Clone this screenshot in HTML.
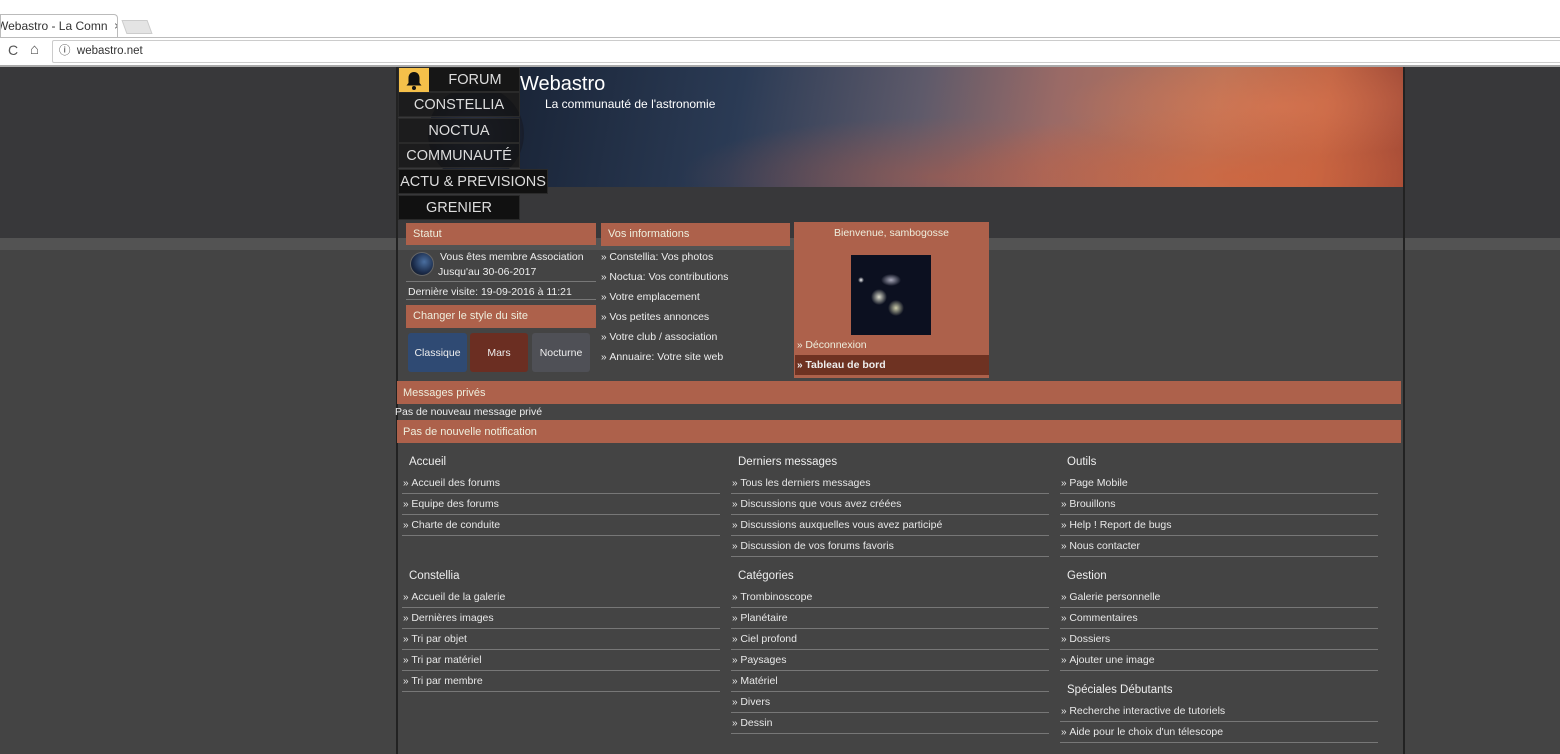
<!DOCTYPE html>
<html><head><meta charset="utf-8"><style>
*{margin:0;padding:0;box-sizing:border-box}
body{width:1560px;height:754px;overflow:hidden;background:#444;font-family:"Liberation Sans","DejaVu Sans",sans-serif;position:relative;color:#e8e8e8}
.a{position:absolute}
.top{left:0;top:0;width:1560px;height:67px;background:#fff}
.band1{left:0;top:67px;width:1560px;height:171px;background:#38383a}
.band2{left:0;top:238px;width:1560px;height:12px;background:#535353}
.vl{top:67px;width:2px;height:687px;background:#222}
.banner{left:520px;top:67px;width:883px;height:120px;background:
radial-gradient(ellipse 220px 50px at 760px 40px,rgba(225,120,80,.55),transparent),
radial-gradient(ellipse 300px 70px at 720px 110px,rgba(210,100,60,.7),transparent),
radial-gradient(ellipse 260px 60px at 420px 110px,rgba(180,90,70,.5),transparent),
linear-gradient(100deg,#1a2538 0%,#2b3b55 25%,#5e5a6a 45%,#9a6a66 60%,#bb7458 78%,#c06545 90%,#9a4535 100%)}
.nav{left:398px;width:122px;height:25px;background:#111;border:1px solid #2a2a2a;color:#ddd;font-size:14.5px;text-align:center;line-height:24px;font-family:"Liberation Sans",sans-serif}
.hd{background:#ad614b;color:#eed;font-size:11px;line-height:22px;padding-left:7px}
.t{font-size:10.5px;color:#eee;white-space:nowrap}
.li{font-size:10.5px;color:#eee;height:20px;line-height:20px}
.col{position:absolute;width:318px}
.col h4{font-weight:normal;font-size:11.5px;color:#eee;height:19px;line-height:19px;padding-left:7px;margin-bottom:1px}
.col .r{height:21px;line-height:20px;border-bottom:1px solid #777;font-size:10.5px;padding-left:1px}
.col .r:before,.li:before{content:"» ";font-size:10px}
</style></head><body>
<div class="a top">
 <div class="a" style="left:0;top:14px;width:118px;height:24px;background:#fff;border:1px solid #bbb;border-bottom:none;border-radius:0 4px 0 0;font-size:12px;color:#333;line-height:22px;white-space:nowrap;overflow:hidden"><span style="margin-left:-4px">Webastro - La Comn</span>&nbsp;&nbsp;<span style="color:#555">×</span></div>
 <div class="a" style="left:124px;top:20px;width:26px;height:14px;background:#e4e4e4;border:1px solid #ccc;transform:skewX(20deg)"></div>
 <div class="a" style="left:0;top:37px;width:1560px;height:1px;background:#bbb"></div>
 <div class="a" style="left:8px;top:42px;font-size:14px;color:#555">C</div>
 <div class="a" style="left:30px;top:41px;font-size:15px;color:#555">⌂</div>
 <div class="a" style="left:52px;top:40px;width:1510px;height:23px;border:1px solid #ccc;border-radius:2px;font-size:11.5px;color:#333;line-height:21px;padding-left:6px">ⓘ&nbsp; webastro.net</div>
 <div class="a" style="left:0;top:65px;width:1560px;height:2px;background:#aaa"></div>
</div>
<div class="a band1"></div><div class="a band2"></div>
<div class="a vl" style="left:396px"></div><div class="a vl" style="left:1403px"></div>
<div class="a banner"></div>
<div class="a" style="left:520px;top:73px;font-size:20px;color:#fff;font-family:'Liberation Sans',sans-serif">Webastro</div>
<div class="a" style="left:545px;top:97px;font-size:12px;color:#fff;font-family:'Liberation Sans',sans-serif">La communauté de l'astronomie</div>
<div class="a" style="left:428px;top:86px;width:96px;height:96px;border-radius:50%;background:radial-gradient(circle,#2a3550 0%,#1a2030 60%,#111 100%);opacity:.8"></div>
<div class="a nav" style="top:67px;background:rgba(17,17,17,.85)"><span style="position:absolute;left:0;top:0;width:30px;height:24px;background:#f5c04a"><svg width="30" height="24" viewBox="0 0 30 24"><path d="M15 4c-3.5 0-5.5 2.5-5.5 6v5l-2 2.5h15l-2-2.5v-5c0-3.5-2-6-5.5-6z" fill="#111"/><circle cx="15" cy="20" r="2" fill="#111"/></svg></span><span style="margin-left:32px">FORUM</span></div>
<div class="a nav" style="top:92px;background:rgba(17,17,17,.7)">CONSTELLIA</div>
<div class="a nav" style="top:118px;background:rgba(17,17,17,.7)">NOCTUA</div>
<div class="a nav" style="top:143px;background:rgba(17,17,17,.7)">COMMUNAUTÉ</div>
<div class="a nav" style="top:169px;width:150px">ACTU &amp; PREVISIONS</div>
<div class="a nav" style="top:195px">GRENIER</div>

<div class="a hd" style="left:406px;top:223px;width:190px">Statut</div>
<div class="a" style="left:410px;top:252px;width:24px;height:24px;border-radius:50%;background:radial-gradient(circle at 60% 40%,#4a6fa0,#1a2a48 60%,#111);border:1px solid #666"></div>
<div class="a t" style="left:440px;top:251px">Vous êtes membre Association</div>
<div class="a t" style="left:438px;top:266px">Jusqu'au 30-06-2017</div>
<div class="a" style="left:406px;top:281px;width:190px;height:1px;background:#777"></div>
<div class="a t" style="left:408px;top:286px">Dernière visite: 19-09-2016 à 11:21</div>
<div class="a" style="left:406px;top:299px;width:190px;height:1px;background:#777"></div>
<div class="a hd" style="left:406px;top:305px;width:190px;height:23px;line-height:23px">Changer le style du site</div>
<div class="a t" style="left:408px;top:333px;width:59px;height:39px;background:#2f4a73;border-radius:3px;text-align:center;line-height:40px">Classique</div>
<div class="a t" style="left:470px;top:333px;width:58px;height:39px;background:#6b2e22;border-radius:3px;text-align:center;line-height:40px">Mars</div>
<div class="a t" style="left:532px;top:333px;width:58px;height:39px;background:#4f5056;border-radius:3px;text-align:center;line-height:40px">Nocturne</div>

<div class="a hd" style="left:601px;top:223px;width:189px;line-height:23px">Vos informations</div>
<div class="a" style="left:601px;top:247px">
 <div class="li">Constellia: Vos photos</div><div class="li">Noctua: Vos contributions</div><div class="li">Votre emplacement</div><div class="li">Vos petites annonces</div><div class="li">Votre club / association</div><div class="li">Annuaire: Votre site web</div>
</div>

<div class="a" style="left:794px;top:222px;width:195px;height:156px;background:#ad614b"></div>
<div class="a t" style="left:794px;top:227px;width:195px;text-align:center;color:#eed">Bienvenue, sambogosse</div>
<div class="a" style="left:851px;top:255px;width:80px;height:80px;background:radial-gradient(ellipse 10px 6px at 40px 25px,#aab 0%,transparent 100%),radial-gradient(circle 8px at 28px 42px,#ddc,transparent),radial-gradient(circle 8px at 45px 53px,#cca,transparent),radial-gradient(circle 3px at 10px 25px,#fff,transparent),#0c1020"></div>
<div class="a li" style="left:797px;top:335px;color:#eed">Déconnexion</div>
<div class="a li" style="left:795px;top:355px;width:194px;background:#6e3222;padding-left:2px;font-weight:bold;color:#eee">Tableau de bord</div>

<div class="a hd" style="left:397px;top:381px;width:1004px;height:23px;line-height:24px;padding-left:6px">Messages privés</div>
<div class="a t" style="left:395px;top:406px">Pas de nouveau message privé</div>
<div class="a hd" style="left:397px;top:420px;width:1004px;height:23px;line-height:24px;padding-left:6px">Pas de nouvelle notification</div>

<div class="col" style="left:402px;top:453px"><h4>Accueil</h4><div class="r">Accueil des forums</div><div class="r">Equipe des forums</div><div class="r">Charte de conduite</div></div>
<div class="col" style="left:731px;top:453px"><h4>Derniers messages</h4><div class="r">Tous les derniers messages</div><div class="r">Discussions que vous avez créées</div><div class="r">Discussions auxquelles vous avez participé</div><div class="r">Discussion de vos forums favoris</div></div>
<div class="col" style="left:1060px;top:453px"><h4>Outils</h4><div class="r">Page Mobile</div><div class="r">Brouillons</div><div class="r">Help ! Report de bugs</div><div class="r">Nous contacter</div></div>
<div class="col" style="left:402px;top:567px"><h4>Constellia</h4><div class="r">Accueil de la galerie</div><div class="r">Dernières images</div><div class="r">Tri par objet</div><div class="r">Tri par matériel</div><div class="r">Tri par membre</div></div>
<div class="col" style="left:731px;top:567px"><h4>Catégories</h4><div class="r">Trombinoscope</div><div class="r">Planétaire</div><div class="r">Ciel profond</div><div class="r">Paysages</div><div class="r">Matériel</div><div class="r">Divers</div><div class="r">Dessin</div></div>
<div class="col" style="left:1060px;top:567px"><h4>Gestion</h4><div class="r">Galerie personnelle</div><div class="r">Commentaires</div><div class="r">Dossiers</div><div class="r">Ajouter une image</div></div>
<div class="col" style="left:1060px;top:681px"><h4>Spéciales Débutants</h4><div class="r">Recherche interactive de tutoriels</div><div class="r">Aide pour le choix d'un télescope</div></div>
</body></html>
